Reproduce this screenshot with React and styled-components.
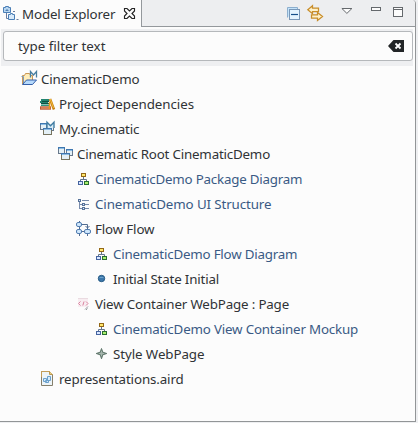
import React from "react";
import styled, { createGlobalStyle } from "styled-components";

const GlobalStyle = createGlobalStyle`
  * { box-sizing: border-box; }
  body { margin: 0; background: #eeeff1; overflow: hidden; }
`;

const Panel = styled.main`
  width: 416px;
  height: 422px;
  display: flex;
  flex-direction: column;
  background: #fcfcfc;
  border-right: 1px solid #929597;
  border-bottom: 1px solid #929597;
  border-top-right-radius: 4px;
  color: #303336;
  font: 13.33px/25px "Noto Sans", sans-serif;
`;

const Header = styled.header`
  display: flex;
  height: 27px;
  flex: none;
`;

const Tab = styled.div`
  width: 141px;
  display: flex;
  align-items: center;
  padding: 1px 0 0 3px;
  white-space: nowrap;
`;

const TabTitle = styled.span`
  width: 102px;
  margin-left: 3px;
  letter-spacing: -0.13px;
`;

const Toolbar = styled.div`
  flex: 1;
  display: flex;
  align-items: flex-start;
  padding: 5px 12px 0 145px;
  background: #edeef0;
  border-left: 1px solid #94989c;
  border-bottom: 1px solid #94989c;
  border-top-right-radius: 4px;
`;

const ToolButton = styled.button`
  display: block;
  padding: 0;
  border: 0;
  background: none;
  margin-left: ${(p) => p.$gap || 0}px;
  height: 16px;
`;

const SearchArea = styled.div`
  flex: none;
  height: 39px;
  margin: 0 2px 0 1px;
  padding: 4px 0 5px 2px;
  background: linear-gradient(#fcfcfc 2px, #eeeff1 2px);
`;

const SearchBox = styled.div`
  height: 30px;
  display: flex;
  align-items: center;
  justify-content: space-between;
  padding: 0 8px 0 14px;
  background: #fcfcfc;
  border: 1px solid #b5b8bb;
  border-radius: 3px;
`;

const Tree = styled.ul`
  list-style: none;
  margin: 0;
  padding: 1px 0 0 21px;
`;

const TreeRow = styled.li`
  height: 25px;
  display: flex;
  align-items: center;
  gap: 2px;
  padding-left: ${(p) => p.$level * 18}px;
  color: ${(p) => (p.$linked ? "#3a5a84" : "#303336")};
  letter-spacing: ${(p) => p.$tracking}px;
  white-space: nowrap;
`;

const IconSlot = styled.span`
  width: 18px;
  height: 17px;
  flex: none;
  display: flex;
  align-items: flex-start;
`;

const Glyph = styled.svg`
  display: block;
  flex: none;
  overflow: visible;
`;

function Icon({ w = 16, h = 16, children }) {
  return (
    <Glyph width={w} height={h} viewBox={`0 0 ${w} ${h}`} fill="none">
      {children}
    </Glyph>
  );
}

const Win = ({ x, y, w = 7, h = 7, stroke = "#68788b" }) => (
  <g>
    <rect x={x + 0.5} y={y + 0.5} width={w - 1} height={h - 1} fill="#e4f0f6" stroke={stroke} />
    <path d={`M${x} ${y + 1}h${w}`} stroke="#3f77b0" strokeWidth="2" />
    <path d={`M${x + 1} ${y + 1.5}h${w - 2}`} stroke="#8dbce2" />
  </g>
);

const icons = {
  explorer: (
    <Icon>
      <path d="M3.5 7v5.5H6M8.5 7v1M13.5 13.5h2M10 5.5h2" stroke="#697da0" />
      <path d="M.5 6.5v-5h2v-1h3v1h2v5z" fill="#b9d7f1" stroke="#4b7fb7" />
      <path d="M2.5 4.5h3M4 3v2" stroke="#5582b3" />
      <path d="M5.5 13.5v-5h2v-1h2v1h2v5z" fill="#d8eafa" stroke="#4b7fb7" />
    </Icon>
  ),
  project: (
    <Icon>
      <path d="M1.5 13V4.5h2l1-2h4l1 2h2V9" fill="#ffedb9" stroke="#c99654" />
      <path d="M.5 5.5h2v8" stroke="#7d98b5" />
      <path d="M1.5 13.5l4-4.5h10l-4 4.5z" fill="#b6dafc" stroke="#345fa9" />
      <path d="M9.5 6.5v-6l3 3.5 3-3.5v6" stroke="#477e9f" strokeWidth="1.3" />
    </Icon>
  ),
  library: (
    <Icon>
      <path d="M2 4h8M1 6h8" stroke="#238470" strokeWidth="2" />
      <path d="M3 5.5h7M2 7.5h8" stroke="#104f43" />
      <path d="M2 9.2h8" stroke="#28917a" strokeWidth="1.5" />
      <path d="M1 12h11" stroke="#b95a36" strokeWidth="3.4" />
      <path d="M2 12h9" stroke="#e99567" strokeWidth="1.3" />
      <path d="M11 3l4 10.5" stroke="#c77e11" strokeWidth="2.5" />
      <path d="M10.5 6v7" stroke="#e69b1c" strokeWidth="1.5" />
      <path d="M11.2 3l3.3 9" stroke="#f5bd3b" />
    </Icon>
  ),
  cinematic: (
    <Icon>
      <Win x={1} y={2} /><Win x={8} y={4} h={6} /><Win x={4} y={7} w={9} stroke="#77745f" />
      <path d="M8 7V1.3l3.5 3.5L15 1.3V7" fill="#d5eaf6" stroke="#427da2" strokeWidth="1.4" />
    </Icon>
  ),
  root: (
    <Icon><Win x={1} y={1} /><Win x={9} y={3} /><Win x={4} y={7} w={9} stroke="#77745f" /></Icon>
  ),
  diagram: (
    <Icon>
      <path d="M8.5 6v3M5.5 10V8.5h6V10" stroke="#65768c" />
      <rect x="6.5" y="2.5" width="4" height="3" fill="#ffe76b" stroke="#946817" />
      <rect x="3.5" y="10.5" width="4" height="3" fill="#d9e6ff" stroke="#4564a0" />
      <rect x="9.5" y="10.5" width="4" height="3" fill="#a9ee6a" stroke="#286d31" />
    </Icon>
  ),
  structure: (
    <Icon>
      <path d="M4.5 4v9M4 8.5h3M5 12.5h2M7 4.5h7M10 8.5h4M10 12.5h4" stroke="#788bac" />
      <rect x="3.5" y="3.5" width="2" height="2" fill="#dce8f8" stroke="#577299" />
      <rect x="7.5" y="7.5" width="2" height="2" fill="#dce8f8" stroke="#577299" />
      <rect x="7.5" y="11.5" width="2" height="2" fill="#dce8f8" stroke="#577299" />
    </Icon>
  ),
  flow: (
    <Icon>
      <path d="M4.5 0v15M12.5 5v10M7 3.5h5.5V7M10.5 5l2 2 2-2M7 10.5h2" stroke="#526c91" />
      <rect x="1.5" y="1.5" width="5" height="4" rx="1.5" fill="#cfe7fc" stroke="#527cb0" />
      <rect x="1.5" y="8.5" width="5" height="4" rx="1.5" fill="#cfe7fc" stroke="#527cb0" />
      <rect x="9.5" y="8.5" width="6" height="4" rx="1.5" fill="#cfe7fc" stroke="#527cb0" />
    </Icon>
  ),
  state: (
    <Icon>
      <circle cx="8.5" cy="7.5" r="3.2" fill="#3c78ac" stroke="#245983" />
      <path d="M6.5 6.5h4" stroke="#6da2ca" />
    </Icon>
  ),
  view: (
    <Icon>
      <path d="M3 2h10v9H3z" fill="#f8edf1" />
      <path d="M3 2.5h10" stroke="#eadbe1" />
      <path d="M5.5 5.5l-2 2 2 2M11 5.5l2 2-2 2M9 5.5l-1.2 4" stroke="#da829f" />
      <path d="M10 13.5l3-3M11 14l1.5-1.5" stroke="#979ba0" />
    </Icon>
  ),
  style: (
    <Icon>
      <path d="M8.5 2.5l1.3 3.7 4 1.3-4 1.3-1.3 4-1.3-4-4-1.3 4-1.3z" fill="#849c8f" stroke="#60776c" />
      <path d="M8.5 5v5M6 7.5h5" stroke="#a6b5ad" />
    </Icon>
  ),
  file: (
    <Icon>
      <path d="M2.5.5h8l3 3v11h-11z" fill="#edf4f8" stroke="#857f6b" />
      <path d="M2.5 6V.5h8l3 3" stroke="#c39d58" />
      <path d="M10.5.5v3h3" fill="#e8cf88" stroke="#ba964f" />
      <path d="M4.5 7.5h3v3h-3zM8.5 5.5h3v4h-3zM6.5 9.5h3v2h-3z" fill="#d5ebfb" stroke="#6aa0cc" />
    </Icon>
  ),
};

const rows = [
  { label: "CinematicDemo", icon: "project", level: 0, tracking: -0.12 },
  { label: "Project Dependencies", icon: "library", level: 1, tracking: -0.04 },
  { label: "My.cinematic", icon: "cinematic", level: 1, tracking: -0.15 },
  { label: "Cinematic Root CinematicDemo", icon: "root", level: 2, tracking: -0.19 },
  { label: "CinematicDemo Package Diagram", icon: "diagram", level: 3, linked: true, tracking: -0.2 },
  { label: "CinematicDemo UI Structure", icon: "structure", level: 3, linked: true, tracking: -0.11 },
  { label: "Flow Flow", icon: "flow", level: 3, tracking: -0.15 },
  { label: "CinematicDemo Flow Diagram", icon: "diagram", level: 4, linked: true, tracking: -0.2 },
  { label: "Initial State Initial", icon: "state", level: 4, tracking: -0.17 },
  { label: "View Container WebPage : Page", icon: "view", level: 3, tracking: -0.16 },
  { label: "CinematicDemo View Container Mockup", icon: "diagram", level: 4, linked: true, tracking: -0.18 },
  { label: "Style WebPage", icon: "style", level: 4, tracking: -0.08 },
  { label: "representations.aird", icon: "file", level: 1, tracking: -0.12 },
];

export default function App() {
  return (
    <>
      <GlobalStyle />
      <Panel>
        <Header>
          <Tab>
            {icons.explorer}
            <TabTitle>Model Explorer</TabTitle>
            <Icon w={11} h={12}>
              <path d="M.5.5h2.5l2.5 2.5L8 .5h2.5v2.5L8 5.5l2.5 2.5v2.5H8L5.5 8 3 10.5H.5V8L3 5.5.5 3z" fill="#fcfcfc" stroke="#252525" strokeWidth="1.15" />
            </Icon>
          </Tab>
          <Toolbar>
            <ToolButton aria-label="Collapse all">
              <Icon>
                <path d="M.5 12.5V2.5h10v2" fill="#c4e3fa" stroke="#8dafce" />
                <rect x="2.5" y="4.5" width="10" height="10" fill="#e4f4ff" stroke="#7a98b8" />
                <path d="M4 9.5h7" stroke="#164f8a" strokeWidth="1.2" />
              </Icon>
            </ToolButton>
            <ToolButton $gap={4} aria-label="Link with editor">
              <Icon>
                <path d="M5.5.7L.8 4.7l4.7 4V6.5h6v-3.5h-6z" fill="#fff1c8" stroke="#c88d2b" strokeWidth="1.25" />
                <path d="M10.5 7.5l5 4-5 4v-2.3h-6V9.8h6z" fill="#fff1c8" stroke="#c88d2b" strokeWidth="1.25" />
              </Icon>
            </ToolButton>
            <ToolButton $gap={18} aria-label="View menu">
              <Icon w={12}><path d="M.9 3.5h10L5.9 8.4z" fill="#fcfcfc" stroke="#65696d" /></Icon>
            </ToolButton>
            <ToolButton $gap={18} aria-label="Minimize">
              <Icon w={10}><rect x=".5" y="2.5" width="9" height="3" fill="#fcfcfc" stroke="#65696d" /></Icon>
            </ToolButton>
            <ToolButton $gap={12} aria-label="Maximize">
              <Icon w={10}>
                <rect x=".5" y="2.5" width="9" height="9" fill="#fcfcfc" stroke="#65696d" />
                <path d="M0 4.5h10" stroke="#65696d" />
              </Icon>
            </ToolButton>
          </Toolbar>
        </Header>
        <SearchArea>
          <SearchBox>
            <span>type filter text</span>
            <ToolButton aria-label="Clear filter">
              <Icon>
                <path d="M5.5 2H16v12H5.5L0 8z" fill="#222527" />
                <path d="M7.5 5.5l5 5M12.5 5.5l-5 5" stroke="#fff" strokeWidth="1.8" />
              </Icon>
            </ToolButton>
          </SearchBox>
        </SearchArea>
        <Tree>
          {rows.map(({ label, icon, level, linked, tracking }) => (
            <TreeRow key={label} $level={level} $linked={linked} $tracking={tracking}>
              <IconSlot>{icons[icon]}</IconSlot>
              <span>{label}</span>
            </TreeRow>
          ))}
        </Tree>
      </Panel>
    </>
  );
}
